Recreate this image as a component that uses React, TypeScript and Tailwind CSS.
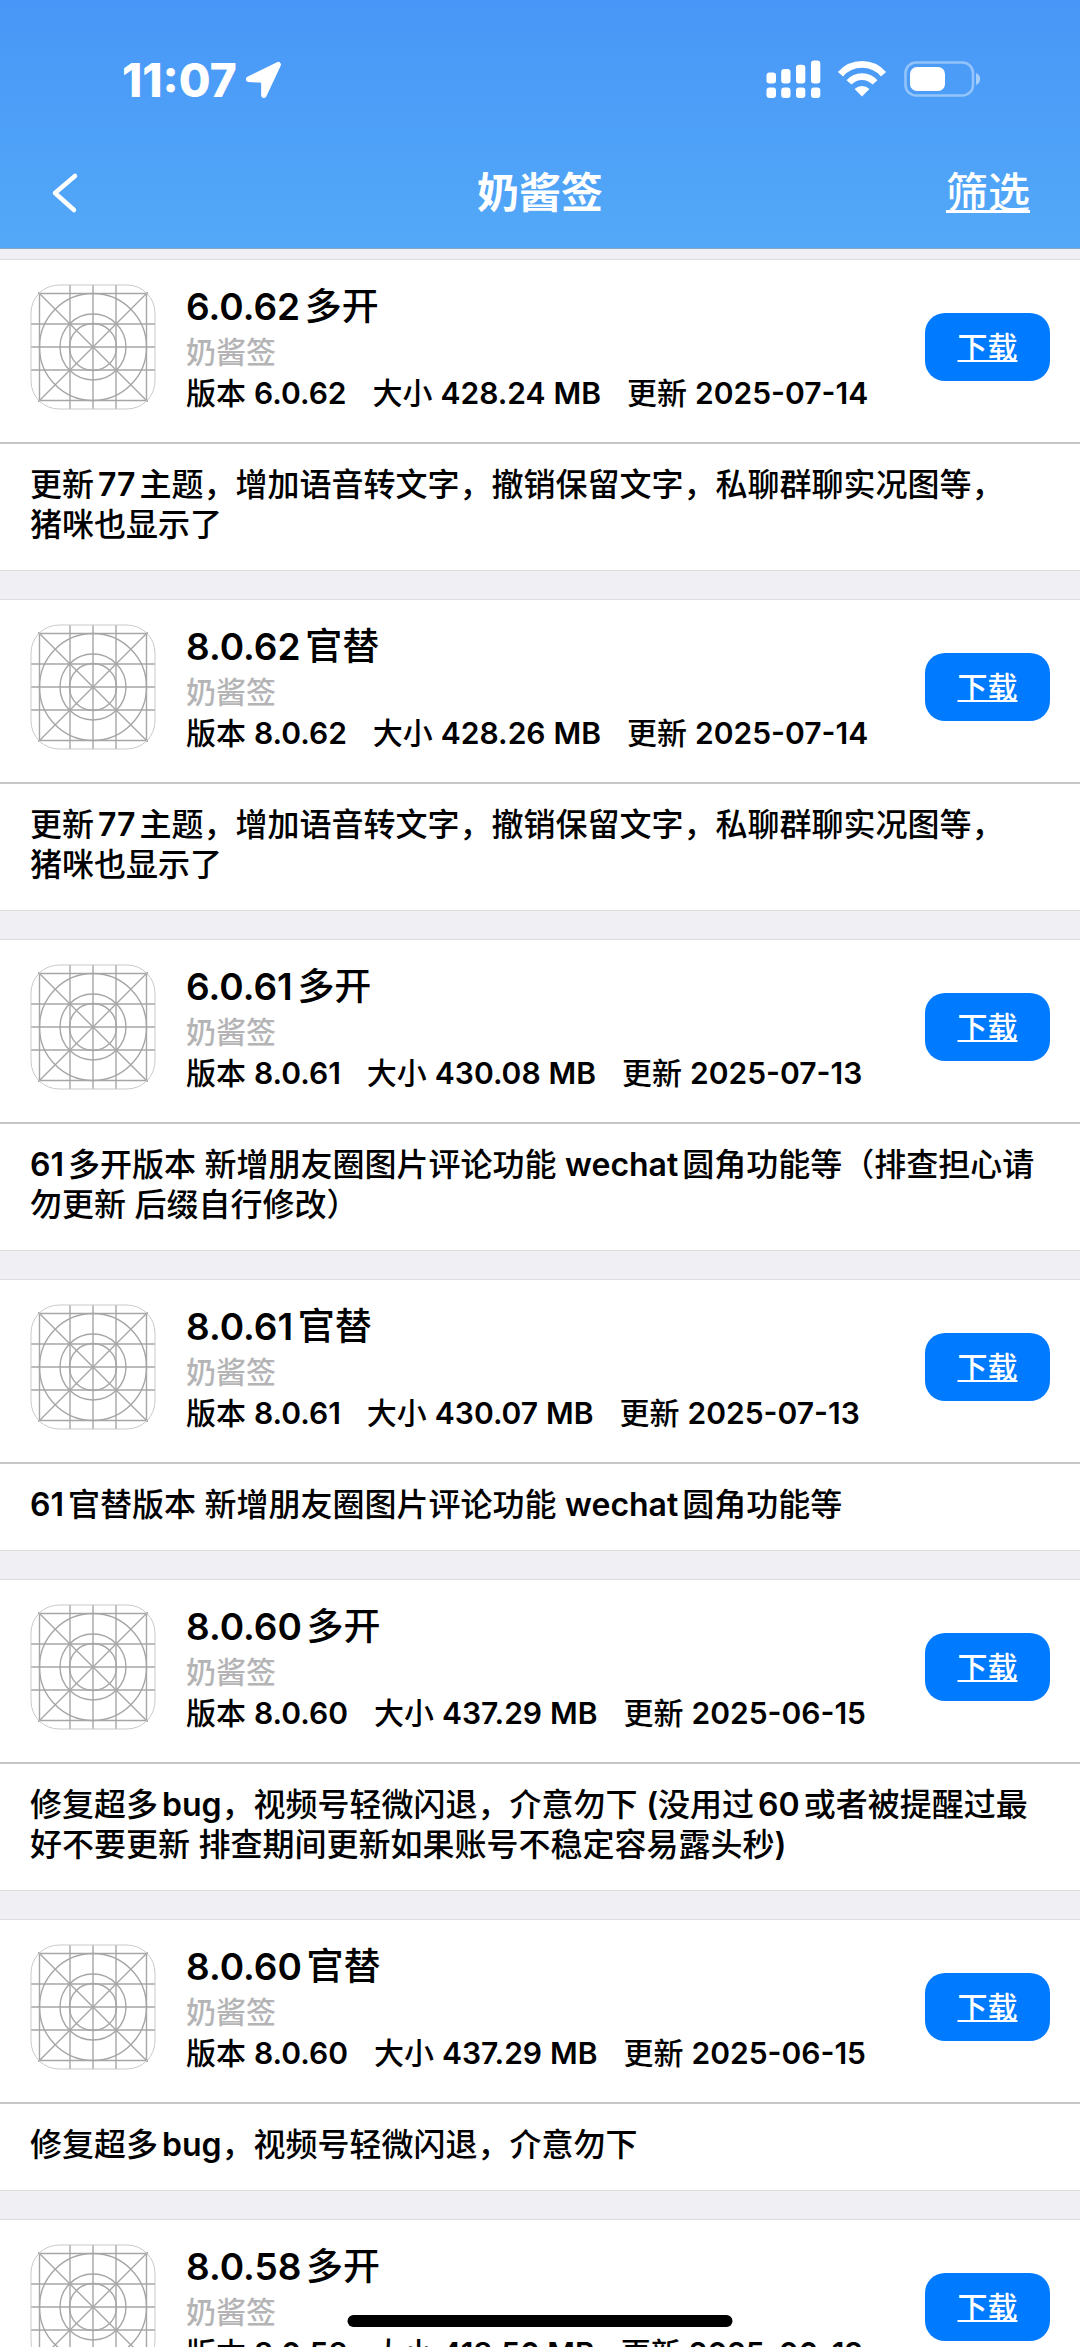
type Release = {
  title: string;
  version: string;
  size: string;
  updated: string;
  notes?: string;
};

const VENDOR = "奶酱签";

const RELEASES: Release[] = [
  {
    title: "6.0.62多开",
    version: "6.0.62",
    size: "428.24 MB",
    updated: "2025-07-14",
    notes: "更新77主题，增加语音转文字，撤销保留文字，私聊群聊实况图等，\n猪咪也显示了",
  },
  {
    title: "8.0.62官替",
    version: "8.0.62",
    size: "428.26 MB",
    updated: "2025-07-14",
    notes: "更新77主题，增加语音转文字，撤销保留文字，私聊群聊实况图等，\n猪咪也显示了",
  },
  {
    title: "6.0.61多开",
    version: "8.0.61",
    size: "430.08 MB",
    updated: "2025-07-13",
    notes: "61多开版本 新增朋友圈图片评论功能 wechat圆角功能等（排查担心请勿更新 后缀自行修改）",
  },
  {
    title: "8.0.61官替",
    version: "8.0.61",
    size: "430.07 MB",
    updated: "2025-07-13",
    notes: "61官替版本 新增朋友圈图片评论功能 wechat圆角功能等",
  },
  {
    title: "8.0.60多开",
    version: "8.0.60",
    size: "437.29 MB",
    updated: "2025-06-15",
    notes: "修复超多bug，视频号轻微闪退，介意勿下 (没用过60或者被提醒过最\n好不要更新 排查期间更新如果账号不稳定容易露头秒)",
  },
  {
    title: "8.0.60官替",
    version: "8.0.60",
    size: "437.29 MB",
    updated: "2025-06-15",
    notes: "修复超多bug，视频号轻微闪退，介意勿下",
  },
  {
    title: "8.0.58多开",
    version: "8.0.58",
    size: "418.56 MB",
    updated: "2025-06-12",
  },
];

// Latin runs are set one step heavier than the Chinese around them
function MixedText({ children }: { children: string }) {
  return children.split(/([\x21-\x7e]+)/).map((part, i) =>
    i % 2 ? (
      <span key={i} className="font-semibold">
        {part}
      </span>
    ) : (
      part
    )
  );
}

function StatusIcons() {
  return (
    <svg width="216" height="40" viewBox="0 0 216 40" fill="white" aria-hidden="true">
      {/* dual sim signal */}
      <rect x="0.5" y="12.5" width="9.5" height="11" rx="3" />
      <rect x="15.2" y="9" width="9.3" height="14.5" rx="3" />
      <rect x="30" y="4.8" width="9.3" height="18.7" rx="3" />
      <rect x="45" y="0.5" width="9.3" height="23" rx="3" />
      <rect x="0.5" y="27.5" width="9.5" height="10.5" rx="3" />
      <rect x="15.2" y="27.5" width="9.3" height="10.5" rx="3" />
      <rect x="30" y="27.5" width="9.3" height="10.5" rx="3" />
      <rect x="45" y="27.5" width="9.3" height="10.5" rx="3" />
      {/* wifi */}
      <g fill="none" stroke="white">
        <path d="M74.5 14.2a28.5 28.5 0 0 1 43 0" strokeWidth="6.8" />
        <path d="M83 22.4a17.5 17.5 0 0 1 26 0" strokeWidth="6.6" />
      </g>
      <path d="M96 36.5l-7.4-7.6a10.8 10.8 0 0 1 14.8 0z" />
      {/* battery */}
      <rect x="139.5" y="2.5" width="67.5" height="33" rx="10.5" fill="none" stroke="white" strokeOpacity="0.4" strokeWidth="2.6" />
      <rect x="144" y="7" width="35" height="24" rx="7" />
      <path d="M210 13c5.5 1.5 5.5 10.5 0 12z" fillOpacity="0.5" />
    </svg>
  );
}

function LocationIcon() {
  return (
    <svg width="38" height="38" viewBox="0 0 38 38" aria-hidden="true">
      <path
        d="M3.6 18.2L33.2 3.6L18.9 34.2V20.8C18.9 19.5 18.5 19 17.3 19Z"
        fill="white"
        stroke="white"
        strokeWidth="5.5"
        strokeLinejoin="round"
      />
    </svg>
  );
}

function AppIcon() {
  return (
    <svg className="shrink-0 rounded-[28px]" width="126" height="126" viewBox="0 0 126 126" fill="none" aria-hidden="true">
      <g stroke="#a6a6a6" strokeWidth="1.4">
        <path d="M9.5 10V116M40 1V125M63 1V125M86 1V125M116.5 10V116" />
        <path d="M8 9.5H118M1 40H125M1 63H125M1 86H125M8 116.5H118" />
        <path d="M8 8L118 118M118 8L8 118" />
        <circle cx="63" cy="63" r="53.5" />
        <circle cx="63" cy="63" r="33" />
        <circle cx="63" cy="63" r="23.5" />
      </g>
      <rect x="1" y="1" width="124" height="124" rx="28" stroke="#c9c9c9" strokeWidth="1" />
    </svg>
  );
}

function ReleaseCard({ title, version, size, updated, notes }: Release) {
  return (
    <article className="border-y border-[#dddddf] bg-white">
      <div className="flex items-start px-[30px] pt-6 pb-[30px]">
        <AppIcon />
        <div className="ml-[30px] min-w-0 flex-1 whitespace-nowrap">
          <h2 className="text-[37px] leading-[46px]">
            <MixedText>{title}</MixedText>
          </h2>
          <p className="text-[30px] leading-[44px] text-[#b4b4b6]">{VENDOR}</p>
          <p className="flex gap-[26px] text-[30px] leading-[38px]">
            <span><MixedText>{`版本 ${version}`}</MixedText></span>
            <span><MixedText>{`大小 ${size}`}</MixedText></span>
            <span><MixedText>{`更新 ${updated}`}</MixedText></span>
          </p>
        </div>
        <button
          type="button"
          aria-label={`下载 ${title}`}
          className="mt-[29px] h-[68px] w-[125px] shrink-0 rounded-[20px] bg-[#007aff] text-[30px] text-white underline decoration-2 underline-offset-2 [text-decoration-skip-ink:none]"
        >
          下载
        </button>
      </div>
      {notes && (
        <p className="border-t-2 border-[#c6c6c8] px-[30px] pt-[21px] pb-[25px] text-[32px] leading-[40px] whitespace-pre-line">
          <MixedText>{notes}</MixedText>
        </p>
      )}
    </article>
  );
}

export default function App() {
  return (
    <div className="flex h-screen flex-col bg-[#efeff4] font-['Inter','Noto_Sans_CJK_SC',sans-serif] font-medium text-black [text-autospace:normal]">
      <header className="shrink-0 border-b border-[#8aa6cc] bg-linear-to-b from-[#4896f7] to-[#53a9f8] text-white">
        <div className="flex h-[160px] items-center justify-between pr-[98px] pl-[122px]">
          <div className="flex items-center gap-2">
            <span className="text-[46px] leading-[52px] font-extrabold">11:07</span>
            <LocationIcon />
          </div>
          <StatusIcons />
        </div>
        <div className="grid h-[66px] grid-cols-[1fr_auto_1fr] items-center px-[50px]">
          <button type="button" aria-label="返回" className="justify-self-start">
            <svg width="30" height="44" viewBox="0 0 30 44" fill="none" aria-hidden="true">
              <path d="M25 5L5 22L24 39" stroke="white" strokeWidth="4.5" strokeLinecap="round" strokeLinejoin="round" />
            </svg>
          </button>
          <h1 className="text-[42px] leading-[60px] font-bold">{VENDOR}</h1>
          <a
            href="#filter"
            className="justify-self-end text-[42px] leading-[60px] underline decoration-3 underline-offset-2 [text-decoration-skip-ink:none]"
          >
            筛选
          </a>
        </div>
        <div className="h-[22px]" />
      </header>

      <main className="flex min-h-0 flex-1 flex-col gap-7 overflow-y-auto pt-[10px] [scrollbar-width:none]">
        {RELEASES.map((release) => (
          <ReleaseCard key={release.title} {...release} />
        ))}
      </main>

      {/* Home indicator */}
      <div className="fixed bottom-5 left-1/2 h-3 w-[385px] -translate-x-1/2 rounded-full bg-black" />
    </div>
  );
}
